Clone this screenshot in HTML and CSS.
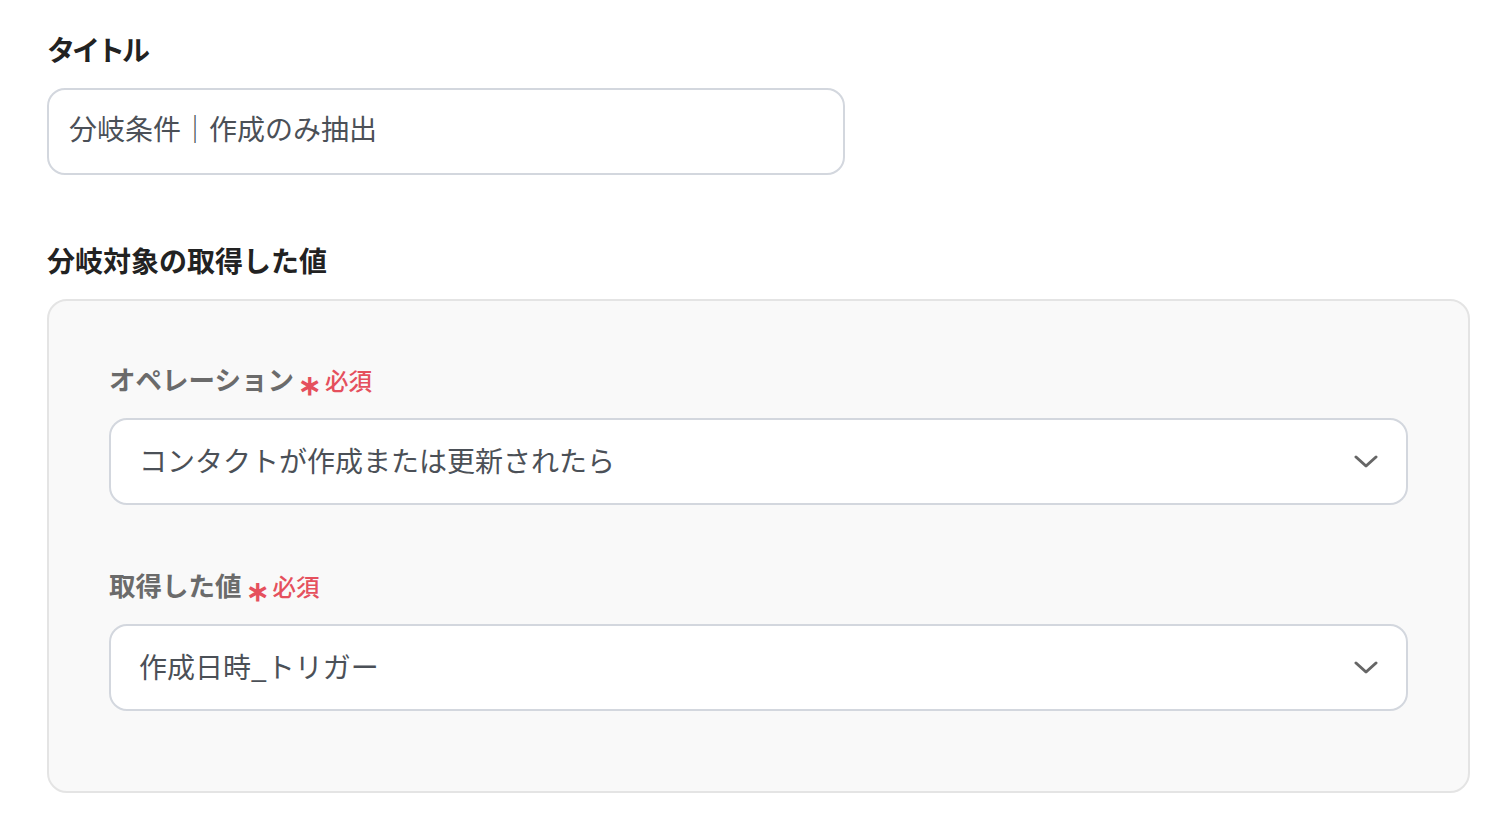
FILE: index.html
```html
<!DOCTYPE html>
<html lang="ja">
<head>
<meta charset="utf-8">
<link rel="stylesheet" href="styles.css">
</head>
<body>
<main class="page">
  <section class="field">
    <div class="label label-title">タイトル</div>
    <div class="input title-input">分岐条件｜作成のみ抽出</div>
  </section>
  <section class="field section2">
    <div class="label">分岐対象の取得した値</div>
    <div class="panel">
      <div class="sub-field">
        <div class="sub-label">オペレーション<span class="req"><span class="ast">∗</span>必須</span></div>
        <div class="input select">
          <span>コンタクトが作成または更新されたら</span>
          <svg class="chev" width="24" height="14" viewBox="0 0 24 14"><path d="M2 2 L12 11 L22 2" fill="none" stroke="#666" stroke-width="3" stroke-linecap="round" stroke-linejoin="round"/></svg>
        </div>
      </div>
      <div class="sub-field second">
        <div class="sub-label">取得した値<span class="req"><span class="ast">∗</span>必須</span></div>
        <div class="input select">
          <span>作成日時_トリガー</span>
          <svg class="chev" width="24" height="14" viewBox="0 0 24 14"><path d="M2 2 L12 11 L22 2" fill="none" stroke="#666" stroke-width="3" stroke-linecap="round" stroke-linejoin="round"/></svg>
        </div>
      </div>
    </div>
  </section>
</main>
</body>
</html>
```
FILE: styles.css
```css
html, body {
  margin: 0;
  padding: 0;
  background: #ffffff;
}
body {
  font-family: "Noto Sans CJK JP", "Noto Sans", sans-serif;
}
.page {
  padding: 28px 42px 0 47px;
}
.field {
  display: flex;
  flex-direction: column;
}
.label {
  font-size: 28px;
  font-weight: 700;
  line-height: 42px;
  color: #222222;
  margin-bottom: 18px;
}
.label-title {
  letter-spacing: -3px;
}
.section2 {
  margin-top: 64px;
}
.input {
  box-sizing: border-box;
  flex-shrink: 0;
  height: 87px;
  border: 2px solid #d3d7de;
  border-radius: 18px;
  background: #ffffff;
  font-size: 28px;
  color: #4b5057;
  display: flex;
  align-items: center;
  padding-bottom: 3px;
}
.title-input {
  width: 798px;
  padding-left: 20px;
  padding-bottom: 8px;
}
.panel {
  box-sizing: border-box;
  background: #f9f9f9;
  border: 2px solid #e4e4e4;
  border-radius: 20px;
  padding: 55px 60px 80px 60px;
}
.sub-field {
  display: flex;
  flex-direction: column;
}
.sub-field.second {
  margin-top: 57px;
}
.sub-label {
  font-size: 26.5px;
  font-weight: 700;
  line-height: 42px;
  color: #6b6b6b;
  margin-bottom: 17px;
  display: flex;
  align-items: center;
}
.req {
  color: #e5505d;
  font-size: 23.5px;
  font-weight: 500;
  margin-left: 4px;
  display: inline-flex;
  align-items: center;
  padding-top: 3px;
}
.ast {
  font-size: 28px;
  font-weight: 700;
  margin-right: 4px;
  line-height: 1;
  position: relative;
  top: 3px;
}
.select {
  justify-content: space-between;
  padding-left: 28px;
  padding-right: 28px;
}
.chev {
  display: block;
  position: relative;
  top: 2px;
}
```
